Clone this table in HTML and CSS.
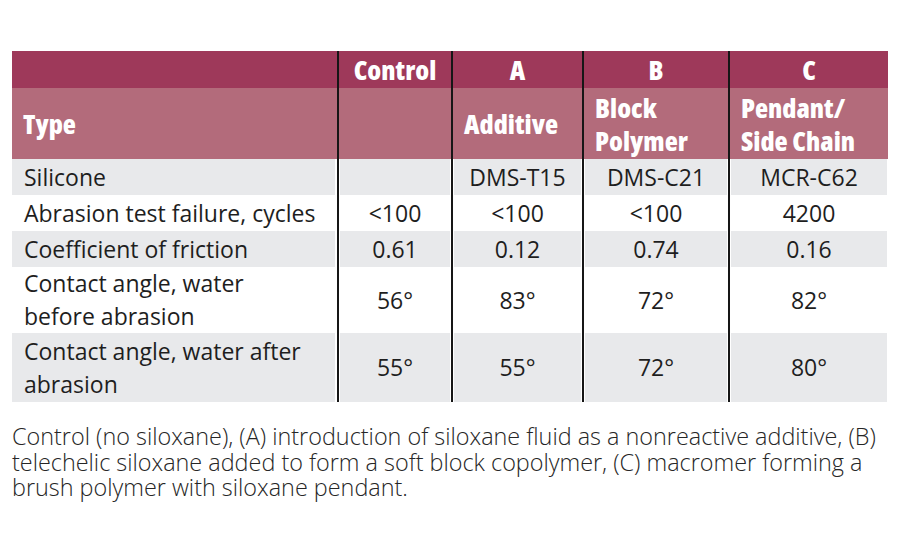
FILE: index.html
```html
<!DOCTYPE html>
<html>
<head>
<meta charset="utf-8">
<link rel="stylesheet" href="styles.css">
</head>
<body>
<div class="page">
  <table class="data">
    <colgroup>
      <col class="c-label">
      <col class="c-ctrl">
      <col class="c-a">
      <col class="c-b">
      <col class="c-c">
    </colgroup>
    <thead>
      <tr class="head-top">
        <th></th>
        <th>Control</th>
        <th>A</th>
        <th>B</th>
        <th>C</th>
      </tr>
      <tr class="head-sub">
        <th>Type</th>
        <th></th>
        <th>Additive</th>
        <th>Block<br>Polymer</th>
        <th>Pendant/<br>Side Chain</th>
      </tr>
    </thead>
    <tbody>
      <tr class="shade">
        <td>Silicone</td><td></td><td>DMS-T15</td><td>DMS-C21</td><td>MCR-C62</td>
      </tr>
      <tr>
        <td>Abrasion test failure, cycles</td><td>&lt;100</td><td>&lt;100</td><td>&lt;100</td><td>4200</td>
      </tr>
      <tr class="shade">
        <td>Coefficient of friction</td><td>0.61</td><td>0.12</td><td>0.74</td><td>0.16</td>
      </tr>
      <tr class="tall">
        <td>Contact angle, water<br>before abrasion</td><td>56°</td><td>83°</td><td>72°</td><td>82°</td>
      </tr>
      <tr class="shade tall last">
        <td>Contact angle, water after<br>abrasion</td><td>55°</td><td>55°</td><td>72°</td><td>80°</td>
      </tr>
    </tbody>
  </table>
  <p class="caption">Control (no siloxane), (A) introduction of siloxane fluid as a nonreactive additive, (B)<br>telechelic siloxane added to form a soft block copolymer, (C) macromer forming a<br>brush polymer with siloxane pendant.</p>
</div>
</body>
</html>
```
FILE: styles.css
```css
html, body {
  margin: 0;
  padding: 0;
  background: #ffffff;
}

.page {
  width: 900px;
  height: 550px;
  padding: 51px 12px 0 12px;
  box-sizing: border-box;
}

.data {
  width: 876px;
  border-collapse: collapse;
  table-layout: fixed;
  font-family: "Open Sans", "Liberation Sans", sans-serif;
  color: #1e1e1e;
}

.c-label { width: 326px; }
.c-ctrl { width: 114px; }
.c-a { width: 131px; }
.c-b { width: 146px; }
.c-c { width: 159px; }

.data th,
.data td {
  padding: 0;
  border-left: 2px solid #161616;
}

.data th:first-child,
.data td:first-child {
  border-left: none;
}

.data th {
  color: #ffffff;
  font-family: "Open Sans", "DejaVu Sans Condensed", sans-serif;
  font-stretch: 75%;
  font-weight: 800;
  font-size: 27px;
  line-height: 33px;
  letter-spacing: 0;
}

.head-top th {
  background: #9e395a;
  height: 37px;
  text-align: center;
}

.head-sub th {
  background: #b36b7b;
  height: 71px;
  text-align: left;
  padding-left: 11px;
  vertical-align: middle;
}

.data td {
  font-size: 23px;
  line-height: 33px;
  height: 36px;
  text-align: center;
  vertical-align: middle;
  box-shadow: inset 1px 0 0 #ffffff, inset -1px 0 0 #ffffff;
}

.data td:first-child {
  text-align: left;
  padding-left: 12px;
  box-shadow: inset -2px 0 0 #ffffff;
}

.data tr.shade td {
  background: #e8e9eb;
}

.data tr.tall td {
  height: 66px;
}

.data tr.last td {
  height: 69px;
}

.caption {
  margin: 22px 0 0 0;
  font-family: "Open Sans", "Liberation Sans", sans-serif;
  font-weight: 300;
  font-size: 23.4px;
  line-height: 25.5px;
  color: #262626;
  white-space: nowrap;
}
```
